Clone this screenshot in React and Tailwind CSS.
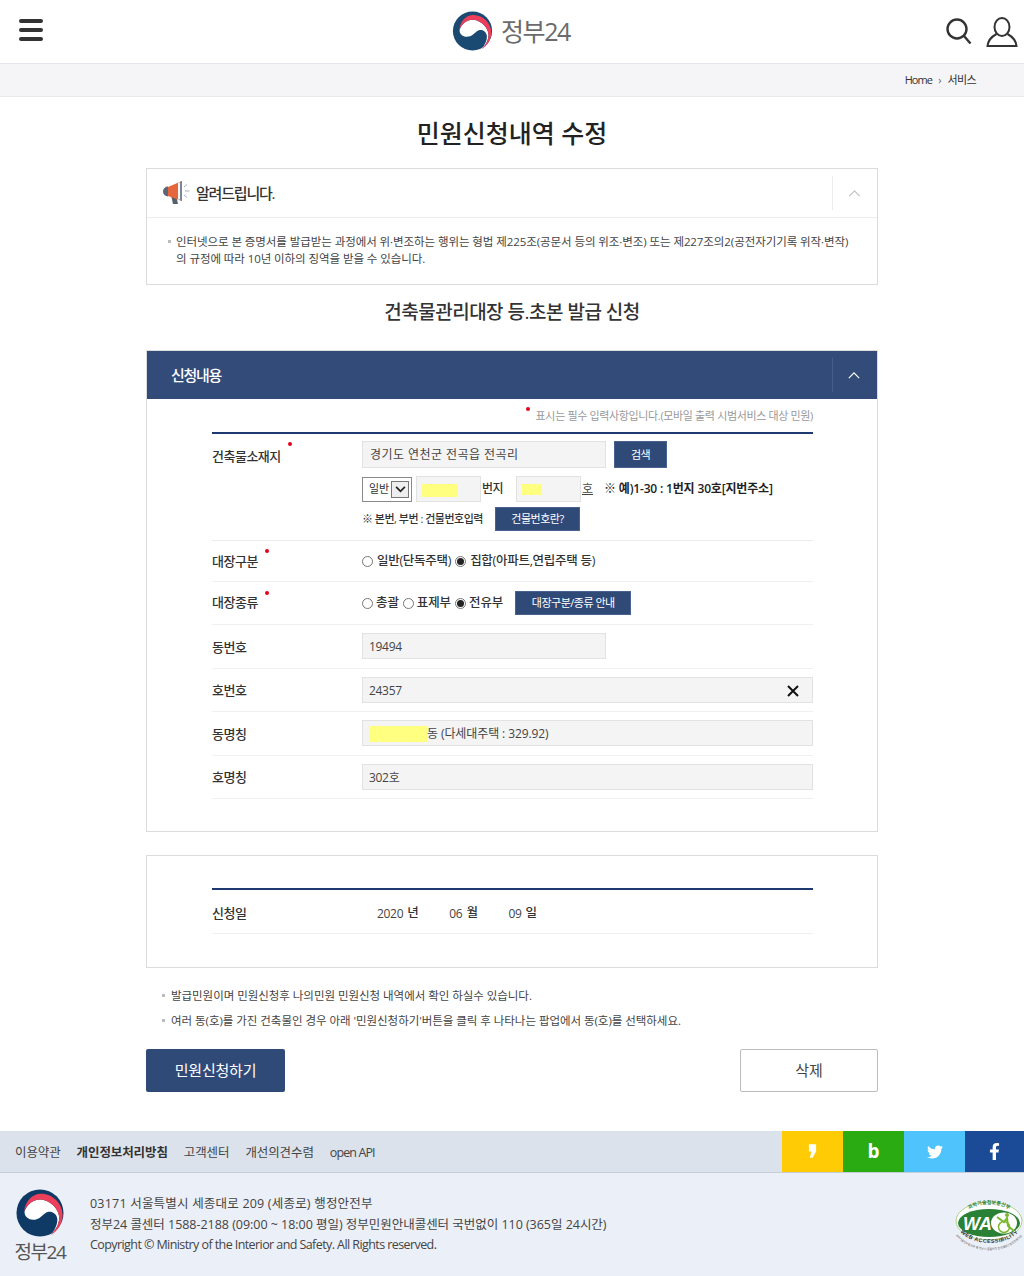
import { FaTwitter, FaFacebookF } from "react-icons/fa";

function Taegeuk({ className, blue = "#1a4a72" }) {
  return (
    <svg viewBox="0 0 100 100" className={className}>
      <circle cx="50" cy="50" r="49" fill={blue} />
      <path d="M18 46 C24 32 36 21 52 22 C72 24 90 42 90 60 C90 74 82 86 72 97 C82 84 87 72 86 62 C84 50 74 46 66 48 C58 50 52 62 40 64 C28 66 16 58 18 46 Z" fill="#fff" />
      <path d="M17 46 C20 22 38 9 52 10 C78 10 97 32 97 54 C97 72 86 88 72 97 C82 86 90 74 90 60 C90 42 72 24 52 22 C36 21 24 32 17 46 Z" fill="#ed3e5a" />
    </svg>
  );
}

function Megaphone() {
  return (
    <svg viewBox="0 0 27 24" className="w-[27px] h-[24px]">
      <path d="M8 14 H13 L15 23 H10 Z" fill="#54606e" />
      <path d="M5 6 L19 0 V20 L5 15 Z" fill="#e5663d" />
      <rect x="15" y="1.5" width="2" height="17" fill="#f5f5f5" />
      <path d="M17 0.8 L19 0 V20 L17 19.3 Z" fill="#7c8793" />
      <path d="M5 5.5 A5 5 0 0 0 5 15.5 Z" fill="#5c6775" />
      <path d="M21 6 L24 3.5 M22 10 H26.5 M21 14 L24 16.5" stroke="#a6adb4" strokeWidth="1" fill="none" />
    </svg>
  );
}

function WaMark() {
  return (
    <svg viewBox="0 0 70 52" className="w-[70px] h-[52px]">
      <defs>
        <path id="wa-top" d="M6 24 A29 20 0 0 1 64 24" />
        <path id="wa-bottom" d="M3 28 C12 41 28 43 36 43 C48 43 60 39 68 28" />
        <path id="wa-small" d="M0 33 C10 48 28 50 36 50 C48 50 60 46 70 34" />
      </defs>
      <ellipse cx="35" cy="21" rx="33" ry="19" fill="#fff" stroke="#9cc76c" strokeWidth="0.8" />
      <ellipse cx="35" cy="23" rx="31" ry="14" fill="#2a8136" />
      <text x="9" y="30" fontFamily="Liberation Sans" fontWeight="700" fontStyle="italic" fontSize="18" fill="#fff">WA</text>
      <ellipse cx="50" cy="23" rx="13" ry="10.5" fill="#fff" />
      <circle cx="53" cy="15" r="2" fill="#7ab82e" />
      <path d="M43 17 L50 22 L53 18 L54 26 L60 31" stroke="#7ab82e" strokeWidth="2" fill="none" />
      <circle cx="50" cy="27" r="5.5" stroke="#7ab82e" strokeWidth="1.5" fill="none" />
      <text fontSize="5" fontWeight="700" fill="#2a8136">
        <textPath href="#wa-top" startOffset="50%" textAnchor="middle">과학기술정보통신부</textPath>
      </text>
      <text fontFamily="Liberation Sans" fontSize="5.4" fontWeight="700" letterSpacing="0.5" fill="#333">
        <textPath href="#wa-bottom" startOffset="50%" textAnchor="middle">WEB ACCESSIBILITY</textPath>
      </text>
      <text fontSize="2.8" fill="#555">
        <textPath href="#wa-small" startOffset="50%" textAnchor="middle">과학기술정보통신부 웹 접근성 품질인증 한국웹접근성인증평가원</textPath>
      </text>
    </svg>
  );
}

function Dot({ className }) {
  return <span className={`absolute w-[4px] h-[4px] rounded-full bg-[#e8001c] ${className}`} />;
}

function Radio({ checked }) {
  return (
    <span className="inline-flex items-center justify-center w-[11px] h-[11px] rounded-full border border-[#767676] bg-white shrink-0">
      {checked && <span className="w-[7px] h-[7px] rounded-full bg-[#222]" />}
    </span>
  );
}

function Btn({ className, children }) {
  return (
    <div className={`flex items-center justify-center bg-[#304a78] border border-[#4a6290] text-white text-[11px] tracking-[-0.5px] pt-[1px] ${className}`}>
      {children}
    </div>
  );
}

function Field({ className, children }) {
  return (
    <div className={`flex items-center h-[26px] px-[6px] pt-[1px] bg-[#f4f4f4] border border-[#e2e2e2] text-[12px] text-[#444] tracking-[-0.3px] ${className}`}>
      {children}
    </div>
  );
}

function Row({ label, height, dot, labelClass = "pt-[2px]", children }) {
  return (
    <div className={`flex items-center border-b border-[#f0f0f0] ${height}`}>
      <div className={`relative w-[150px] text-[13px] font-medium text-[#333] tracking-[-0.5px] ${labelClass}`}>
        {label}
        {dot && <Dot className={dot} />}
      </div>
      <div className="flex-1 flex items-center">{children}</div>
    </div>
  );
}

export default function App() {
  return (
    <div className="w-[1024px] h-[1276px] bg-white overflow-hidden text-[#333] font-['Open_Sans','Noto_Sans_CJK_KR',sans-serif]">
      <header className="relative flex items-center justify-between h-[64px] pl-[19px] pr-[6px] border-b border-[#e3e5ec]">
        <div className="flex flex-col gap-[5px] w-[24px] mb-[4px]">
          <span className="h-[4px] rounded-full bg-[#333]" />
          <span className="h-[4px] rounded-full bg-[#333]" />
          <span className="h-[4px] rounded-full bg-[#333]" />
        </div>
        <div className="flex items-center gap-[8px] absolute left-[452px] top-[11px]">
          <Taegeuk className="w-[41px] h-[40px]" />
          <span className="text-[25px] leading-[40px] text-[#6b6b6b] tracking-[-1.4px]">정부24</span>
        </div>
        <div className="flex items-center gap-[14px]">
          <svg viewBox="0 0 26 27" className="w-[26px] h-[27px]" fill="none" stroke="#333" strokeWidth="2.4">
            <circle cx="11" cy="11" r="9.5" />
            <path d="M18 18 L24.5 25.5" />
          </svg>
          <svg viewBox="0 0 32 30" className="w-[32px] h-[30px]" fill="none" stroke="#333" strokeWidth="2">
            <ellipse cx="16" cy="10" rx="7.5" ry="9" />
            <path d="M10.5 17 C5 20 2 24 1.5 29 H30.5 C30 24 27 20 21.5 17" />
          </svg>
        </div>
      </header>

      <div className="flex items-center justify-end h-[33px] pr-[48px] pt-[1px] bg-[#f5f4f6] border-b border-[#e8e8e8] text-[11px] text-[#333]">
        <span className="tracking-[-0.9px]">Home</span>
        <span className="mx-[6px] text-[#666]">›</span>
        <span className="tracking-[-0.6px]">서비스</span>
      </div>

      <main className="w-[732px] ml-[146px]">
        <h1 className="h-[71px] pt-[2px] flex items-center justify-center text-[25px] font-medium text-[#222]">
          민원신청내역 수정
        </h1>

        <section className="border border-[#dcdcdc] h-[117px]">
          <div className="flex items-center h-[49px] border-b border-[#ececec]">
            <div className="flex items-center gap-[6px] flex-1 pl-[16px]">
              <Megaphone />
              <span className="text-[15px] font-medium tracking-[-1.2px] text-[#333]">알려드립니다.</span>
            </div>
            <div className="flex items-center justify-center w-[45px] h-[34px] pr-[2px] border-l border-[#ececec]">
              <svg viewBox="0 0 14 8" className="w-[13px] h-[7px]" fill="none" stroke="#bbb" strokeWidth="1.2">
                <path d="M1 7 L7 1 L13 7" />
              </svg>
            </div>
          </div>
          <div className="relative pt-[15px] pl-[29px] text-[11.5px] leading-[17px] text-[#444] tracking-[-0.08px] whitespace-nowrap">
            <span className="absolute left-[21px] top-[22px] w-[3px] h-[3px] bg-[#bbb]" />
            인터넷으로 본 증명서를 발급받는 과정에서 위·변조하는 행위는 형법 제225조(공문서 등의 위조·변조) 또는 제227조의2(공전자기기록 위작·변작)
            <br />
            의 규정에 따라 10년 이하의 징역을 받을 수 있습니다.
          </div>
        </section>

        <h2 className="h-[55px] flex items-center justify-center text-[19px] font-medium text-[#333] tracking-[-0.5px]">
          건축물관리대장 등.초본 발급 신청
        </h2>

        <section className="border border-[#dcdcdc] h-[482px] mt-[10px]">
          <div className="flex items-center h-[48px] bg-[#334b79]">
            <div className="flex-1 pl-[24px] text-[15px] font-medium text-white tracking-[-1.3px]">신청내용</div>
            <div className="flex items-center justify-center w-[45px] h-[34px] pr-[2px] border-l border-[#475d87]">
              <svg viewBox="0 0 14 8" className="w-[12px] h-[7px]" fill="none" stroke="#fff" strokeWidth="1.4">
                <path d="M1 7 L7 1 L13 7" />
              </svg>
            </div>
          </div>

          <div className="ml-[65px] mr-[64px]">
            <div className="relative h-[35px] flex items-center justify-end text-[11px] text-[#999] tracking-[-0.35px] border-b-2 border-[#1f3a70] pt-[1px]">
              <Dot className="left-[314px] top-[8px]" />
              표시는 필수 입력사항입니다.(모바일 출력 시범서비스 대상 민원)
            </div>

            <div className="flex border-b border-[#ececec] h-[107px]">
              <div className="relative w-[150px] pt-[13px] text-[13px] font-medium tracking-[-0.5px]">
                건축물소재지
                <Dot className="left-[76px] top-[8px]" />
              </div>
              <div className="flex-1 pt-[7px]">
                <div className="flex gap-[8px] h-[27px]">
                  <Field className="w-[244px] h-[27px] !tracking-[0.45px] pl-[7px]">경기도 연천군 전곡읍 전곡리</Field>
                  <Btn className="w-[53px]">검색</Btn>
                </div>
                <div className="flex items-center h-[26px] mt-[8px] text-[12px]">
                  <div className="flex items-center justify-between w-[50px] h-[25px] pl-[6px] pr-[2px] border border-[#8a8a8a] text-[11px] text-[#333]">
                    일반
                    <span className="flex items-center justify-center w-[18px] h-[17px] border border-[#777] bg-[#eee]">
                      <svg viewBox="0 0 12 8" className="w-[11px] h-[7px]" fill="none" stroke="#222" strokeWidth="2">
                        <path d="M1 1 L6 6 L11 1" />
                      </svg>
                    </span>
                  </div>
                  <Field className="w-[65px] ml-[4px] pl-[5px]">
                    <span className="block w-[36px] h-[13px] mt-[2px] bg-[#ffff80]" />
                  </Field>
                  <span className="w-[35px] pl-[1px] font-medium tracking-[-0.5px]">번지</span>
                  <Field className="w-[65px] pl-[5px]">
                    <span className="block w-[20px] h-[11px] bg-[#ffff80]" />
                  </Field>
                  <span className="w-[23px] pl-[1px] underline text-[#444]">호</span>
                  <span className="font-semibold tracking-[-0.17px] text-[#222]">※ 예)1-30 : 1번지 30호[지번주소]</span>
                </div>
                <div className="flex items-center h-[24px] mt-[5px]">
                  <span className="w-[133px] text-[11px] tracking-[-0.5px] font-medium text-[#333] whitespace-nowrap">※ 본번, 부번 : 건물번호입력</span>
                  <Btn className="w-[85px] h-[24px]">건물번호란?</Btn>
                </div>
              </div>
            </div>

            <Row label="대장구분" height="h-[41px]" dot="left-[53px] top-[-2px]" labelClass="pt-[1px]">
              <div className="flex items-center gap-[4px] text-[12.5px] tracking-[-0.28px] font-medium text-[#333]">
                <Radio />
                <span>일반(단독주택)</span>
                <Radio checked />
                <span>집합(아파트,연립주택 등)</span>
              </div>
            </Row>

            <Row label="대장종류" height="h-[43px]" dot="left-[53px] top-[-2px]" labelClass="pb-[1px]">
              <div className="flex items-center gap-[3px] text-[12.5px] tracking-[-0.1px] font-medium text-[#333]">
                <Radio />
                <span className="mr-[1px]">총괄</span>
                <Radio />
                <span className="mr-[1px]">표제부</span>
                <Radio checked />
                <span>전유부</span>
              </div>
              <Btn className="w-[116px] h-[24px] ml-[12px]">대장구분/종류 안내</Btn>
            </Row>

            <Row label="동번호" height="h-[44px]">
              <Field className="w-[244px] mb-[1px]">19494</Field>
            </Row>
            <Row label="호번호" height="h-[43px]" labelClass="pt-[1px]">
              <Field className="flex-1 justify-between pr-[13px]">
                24357
                <svg viewBox="0 0 12 12" className="w-[12px] h-[12px]" stroke="#111" strokeWidth="2">
                  <path d="M1 1 L11 11 M11 1 L1 11" />
                </svg>
              </Field>
            </Row>
            <Row label="동명칭" height="h-[44px]">
              <Field className="flex-1 mb-[1px] !tracking-[-0.1px]">
                <span className="block w-[58px] h-[16px] bg-[#ffff80]" />동 (다세대주택 : 329.92)
              </Field>
            </Row>
            <Row label="호명칭" height="h-[43px]" labelClass="pt-[1px]">
              <Field className="flex-1">302호</Field>
            </Row>
          </div>
        </section>

        <section className="border border-[#dcdcdc] h-[113px] mt-[23px] pl-[65px] pr-[64px] pt-[32px]">
          <div className="flex items-center h-[46px] pt-[4px] border-t-2 border-[#1f3a70] border-b border-b-[#f0f0f0]">
            <div className="w-[165px] text-[13px] font-medium tracking-[-0.5px]">신청일</div>
            <div className="flex items-center text-[12px] text-[#444] tracking-[-0.3px]">
              <span>2020</span>
              <span className="w-[46px] pl-[4px] font-medium text-[12.5px] text-[#333]">년</span>
              <span>06</span>
              <span className="w-[46px] pl-[4px] font-medium text-[12.5px] text-[#333]">월</span>
              <span>09</span>
              <span className="pl-[4px] font-medium text-[12.5px] text-[#333]">일</span>
            </div>
          </div>
        </section>

        <ul className="mt-[15px] pl-[25px] text-[11.5px] leading-[25px] text-[#444] tracking-[-0.04px] whitespace-nowrap">
          <li className="relative">
            <span className="absolute left-[-9px] top-[11px] w-[3px] h-[3px] bg-[#bbb]" />
            발급민원이며 민원신청후 나의민원 민원신청 내역에서 확인 하실수 있습니다.
          </li>
          <li className="relative">
            <span className="absolute left-[-9px] top-[11px] w-[3px] h-[3px] bg-[#bbb]" />
            여러 동(호)를 가진 건축물인 경우 아래 '민원신청하기'버튼을 클릭 후 나타나는 팝업에서 동(호)를 선택하세요.
          </li>
        </ul>

        <div className="flex justify-between mt-[16px]">
          <div className="flex items-center justify-center w-[139px] h-[43px] rounded-[2px] bg-[#304a78] text-[15px] text-white tracking-[-0.2px]">
            민원신청하기
          </div>
          <div className="flex items-center justify-center w-[138px] h-[43px] rounded-[2px] border border-[#bcbcbc] text-[15px] text-[#444]">
            삭제
          </div>
        </div>
      </main>

      <footer className="mt-[39px]">
        <div className="flex items-center justify-between h-[42px] bg-[#dce2eb] border-b border-[#c6ccd8]">
          <nav className="flex items-center gap-[16px] pl-[15px] pt-[3px] text-[12.5px] tracking-[-0.1px] text-[#444]">
            <span>이용약관</span>
            <span className="font-bold text-[#333]">개인정보처리방침</span>
            <span>고객센터</span>
            <span>개선의견수렴</span>
            <span className="tracking-[-0.9px]">open API</span>
          </nav>
          <div className="flex h-[41px]">
            <div className="flex items-center justify-center w-[61px] bg-[#ffcb05]">
              <svg viewBox="0 0 10 16" className="w-[9px] h-[15px]">
                <path d="M1 0 H9 V8 L5 15 H2 L4 8 H1 Z" fill="#fff" />
              </svg>
            </div>
            <div className="flex items-center justify-center w-[61px] bg-[#2bab12] text-[19px] font-bold text-white">b</div>
            <div className="flex items-center justify-center w-[61px] bg-[#4fc3fb] text-white">
              <FaTwitter size={16} />
            </div>
            <div className="flex items-center justify-center w-[59px] bg-[#1b4b96] text-white">
              <FaFacebookF size={17} />
            </div>
          </div>
        </div>
        <div className="relative flex h-[104px] bg-[#ebeff7]">
          <div className="flex flex-col items-center w-[80px] pt-[16px]">
            <Taegeuk className="w-[48px] h-[48px]" blue="#0f3a66" />
            <span className="text-[19px] leading-[24px] text-[#555] tracking-[-1.4px] mt-[3px]">정부24</span>
          </div>
          <div className="pl-[10px] pt-[21px] text-[12.5px] leading-[20.5px] text-[#444]">
            <div className="tracking-[0.2px]">03171 서울특별시 세종대로 209 (세종로) 행정안전부</div>
            <div className="tracking-[-0.03px]">정부24 콜센터 1588-2188 (09:00 ~ 18:00 평일) 정부민원안내콜센터 국번없이 110 (365일 24시간)</div>
            <div className="tracking-[-0.58px]">Copyright © Ministry of the Interior and Safety. All Rights reserved.</div>
          </div>
          <div className="absolute right-0 top-[27px]">
            <WaMark />
          </div>
        </div>
      </footer>
    </div>
  );
}
